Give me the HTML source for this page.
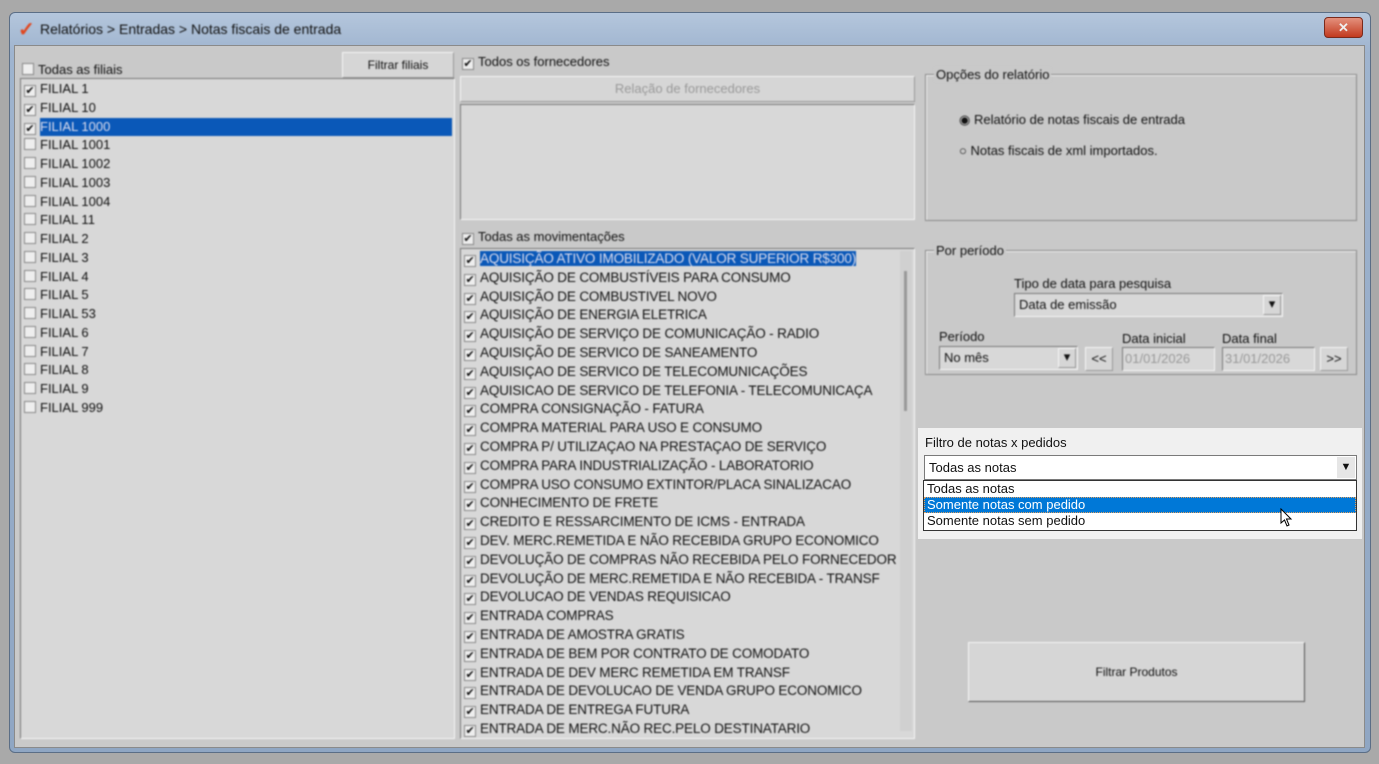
<!DOCTYPE html>
<html><head><meta charset="utf-8"><style>
*{margin:0;padding:0;box-sizing:border-box}
body{width:1379px;height:764px;background:#a9a9a9;font-family:"Liberation Sans",sans-serif;font-size:13px;color:#111;position:relative;overflow:hidden}
.a{position:absolute}
.win{left:9px;top:12px;width:1362px;height:741px;border-radius:6px;background:linear-gradient(#b4c6dc,#9fb4cf 40px,#8fa6c3);border:1px solid #5b6e86}
.cli{left:14px;top:45px;width:1351px;height:703px;background:#c9c9c9;border:1px solid #8a8a8a}
.blur{filter:blur(0.7px)}
.list{background:#d8d8d8;border:1px solid #7a7a7a;border-right-color:#f4f4f4;border-bottom-color:#f4f4f4}
.it{position:absolute;left:3px;height:18px;line-height:18px;white-space:nowrap}
.cb{display:inline-block;width:12px;height:12px;border:1px solid #888;background:#eee;vertical-align:-1px;margin-right:4px;font-size:11px;line-height:10px;text-align:center}
.btn{background:#d6d6d6;border:1px solid #999;border-top-color:#f5f5f5;border-left-color:#f5f5f5;text-align:center}
.grp{border:1px solid #8a8a8a;box-shadow:1px 1px 0 #f0f0f0 inset}
.lg{position:absolute;top:-8px;left:8px;background:#c9c9c9;padding:0 2px}
.sel{background:#0a58b8;color:#dde}
</style></head><body>
<div class="a win"></div>
<div class="a blur" style="left:18px;top:17px;font-size:20px;color:#e04820;font-weight:bold">✓</div>
<div class="a blur" style="left:40px;top:21px;font-size:14px">Relatórios &gt; Entradas &gt; Notas fiscais de entrada</div>
<div class="a" style="left:1324px;top:17px;width:39px;height:21px;border-radius:4px;background:linear-gradient(#e4917e,#c23a1f);border:1px solid #7a2a1c;color:#eee;text-align:center;font-weight:bold;line-height:19px">✕</div>
<div class="a cli"></div>
<div class="blur">
<div class="a" style="left:22px;top:62px"><span class="cb"></span>Todas as filiais</div>
<div class="a btn" style="left:342px;top:52px;width:112px;height:26px;line-height:24px;font-size:12px">Filtrar filiais</div>
<div class="a list" style="left:20px;top:78px;width:435px;height:661px">
<div class="it" style="top:1px"><span class="cb">✔</span>FILIAL 1</div>
<div class="it" style="top:20px"><span class="cb">✔</span>FILIAL 10</div>
<div class="it" style="top:39px"><span class="cb">✔</span><span class="sel" style="display:inline-block;width:412px">FILIAL 1000</span></div>
<div class="it" style="top:57px"><span class="cb"></span>FILIAL 1001</div>
<div class="it" style="top:76px"><span class="cb"></span>FILIAL 1002</div>
<div class="it" style="top:95px"><span class="cb"></span>FILIAL 1003</div>
<div class="it" style="top:114px"><span class="cb"></span>FILIAL 1004</div>
<div class="it" style="top:132px"><span class="cb"></span>FILIAL 11</div>
<div class="it" style="top:151px"><span class="cb"></span>FILIAL 2</div>
<div class="it" style="top:170px"><span class="cb"></span>FILIAL 3</div>
<div class="it" style="top:189px"><span class="cb"></span>FILIAL 4</div>
<div class="it" style="top:207px"><span class="cb"></span>FILIAL 5</div>
<div class="it" style="top:226px"><span class="cb"></span>FILIAL 53</div>
<div class="it" style="top:245px"><span class="cb"></span>FILIAL 6</div>
<div class="it" style="top:264px"><span class="cb"></span>FILIAL 7</div>
<div class="it" style="top:282px"><span class="cb"></span>FILIAL 8</div>
<div class="it" style="top:301px"><span class="cb"></span>FILIAL 9</div>
<div class="it" style="top:320px"><span class="cb"></span>FILIAL 999</div>
</div>
<div class="a" style="left:462px;top:54px"><span class="cb">✔</span>Todos os fornecedores</div>
<div class="a btn" style="left:460px;top:76px;width:455px;height:26px;line-height:24px;color:#999">Relação de fornecedores</div>
<div class="a list" style="left:460px;top:104px;width:455px;height:116px"></div>
<div class="a" style="left:462px;top:229px"><span class="cb">✔</span>Todas as movimentações</div>
<div class="a list" style="left:460px;top:248px;width:455px;height:491px;overflow:hidden">
<div class="a" style="right:2px;top:2px;width:12px;height:480px;background:#d0d0d0"><div style="margin:20px 4px;width:3px;height:140px;background:#999"></div></div>
<div style="position:absolute;top:1px;left:3px;line-height:18.8px;font-size:13.5px;letter-spacing:-0.15px;white-space:nowrap">
<div><span class="cb">✔</span><span class="sel">AQUISIÇÃO ATIVO IMOBILIZADO (VALOR SUPERIOR R$300)</span></div>
<div><span class="cb">✔</span>AQUISIÇÃO DE COMBUSTÍVEIS PARA CONSUMO</div>
<div><span class="cb">✔</span>AQUISIÇÃO DE COMBUSTIVEL NOVO</div>
<div><span class="cb">✔</span>AQUISIÇÃO DE ENERGIA ELETRICA</div>
<div><span class="cb">✔</span>AQUISIÇÃO DE SERVIÇO DE COMUNICAÇÃO - RADIO</div>
<div><span class="cb">✔</span>AQUISIÇÃO DE SERVICO DE SANEAMENTO</div>
<div><span class="cb">✔</span>AQUISIÇAO DE SERVICO DE TELECOMUNICAÇÕES</div>
<div><span class="cb">✔</span>AQUISICAO DE SERVICO DE TELEFONIA - TELECOMUNICAÇA</div>
<div><span class="cb">✔</span>COMPRA CONSIGNAÇÃO - FATURA</div>
<div><span class="cb">✔</span>COMPRA MATERIAL PARA USO E CONSUMO</div>
<div><span class="cb">✔</span>COMPRA P/ UTILIZAÇAO NA PRESTAÇAO DE SERVIÇO</div>
<div><span class="cb">✔</span>COMPRA PARA INDUSTRIALIZAÇÃO - LABORATORIO</div>
<div><span class="cb">✔</span>COMPRA USO CONSUMO EXTINTOR/PLACA SINALIZACAO</div>
<div><span class="cb">✔</span>CONHECIMENTO DE FRETE</div>
<div><span class="cb">✔</span>CREDITO E RESSARCIMENTO DE ICMS - ENTRADA</div>
<div><span class="cb">✔</span>DEV. MERC.REMETIDA E NÃO RECEBIDA GRUPO ECONOMICO</div>
<div><span class="cb">✔</span>DEVOLUÇÃO DE COMPRAS NÃO RECEBIDA PELO FORNECEDOR</div>
<div><span class="cb">✔</span>DEVOLUÇÃO DE MERC.REMETIDA E NÃO RECEBIDA - TRANSF</div>
<div><span class="cb">✔</span>DEVOLUCAO DE VENDAS REQUISICAO</div>
<div><span class="cb">✔</span>ENTRADA COMPRAS</div>
<div><span class="cb">✔</span>ENTRADA DE AMOSTRA GRATIS</div>
<div><span class="cb">✔</span>ENTRADA DE BEM POR CONTRATO DE COMODATO</div>
<div><span class="cb">✔</span>ENTRADA DE DEV MERC REMETIDA EM TRANSF</div>
<div><span class="cb">✔</span>ENTRADA DE DEVOLUCAO DE VENDA GRUPO ECONOMICO</div>
<div><span class="cb">✔</span>ENTRADA DE ENTREGA FUTURA</div>
<div><span class="cb">✔</span>ENTRADA DE MERC.NÃO REC.PELO DESTINATARIO</div>
</div></div>
<div class="a grp" style="left:925px;top:74px;width:432px;height:147px"><div class="lg">Opções do relatório</div>
<div class="a" style="left:33px;top:37px">◉ Relatório de notas fiscais de entrada</div>
<div class="a" style="left:33px;top:68px">○ Notas fiscais de xml importados.</div></div>
<div class="a grp" style="left:925px;top:250px;width:432px;height:125px"><div class="lg">Por período</div>
<div class="a" style="left:88px;top:25px">Tipo de data para pesquisa</div>
<div class="a list" style="left:88px;top:42px;width:269px;height:24px;padding:3px 4px">Data de emissão<span style="position:absolute;right:1px;top:1px;width:18px;height:20px" class="btn">▾</span></div>
<div class="a" style="left:13px;top:78px">Período</div>
<div class="a list" style="left:13px;top:95px;width:139px;height:24px;padding:3px 4px">No mês<span style="position:absolute;right:1px;top:1px;width:18px;height:20px" class="btn">▾</span></div>
<div class="a btn" style="left:159px;top:96px;width:28px;height:24px;line-height:22px">&lt;&lt;</div>
<div class="a" style="left:196px;top:80px">Data inicial</div>
<div class="a list" style="left:196px;top:96px;width:93px;height:24px;padding:3px 2px;color:#999">01/01/2026</div>
<div class="a" style="left:296px;top:80px">Data final</div>
<div class="a list" style="left:296px;top:96px;width:93px;height:24px;padding:3px 2px;color:#999">31/01/2026</div>
<div class="a btn" style="left:394px;top:96px;width:28px;height:24px;line-height:22px">&gt;&gt;</div>
</div>
<div class="a btn" style="left:968px;top:642px;width:337px;height:60px;line-height:58px;font-size:12px;border-right-color:#555;border-bottom-color:#555">Filtrar Produtos</div>
</div>
<div class="a" style="left:918px;top:428px;width:444px;height:111px;background:#f0f0f0;font-size:13px">
<div class="a" style="left:7px;top:7px">Filtro de notas x pedidos</div>
<div class="a" style="left:6px;top:27px;width:433px;height:25px;background:#fff;border:1px solid #7a7a7a;padding:4px 4px">Todas as notas<span class="a" style="right:1px;top:1px;width:18px;height:21px;background:#e6e6e6;text-align:center;font-size:11px;line-height:21px">▼</span></div>
<div class="a" style="left:5px;top:52px;width:434px;height:51px;background:#fff;border:1px solid #333">
<div style="height:16px;line-height:16px;padding-left:3px">Todas as notas</div>
<div style="height:16px;line-height:16px;padding-left:3px;background:#0078d7;color:#fff;outline:1px dotted #e0a060;outline-offset:-1px">Somente notas com pedido</div>
<div style="height:16px;line-height:16px;padding-left:3px">Somente notas sem pedido</div></div>
<svg class="a" style="left:362px;top:80px" width="14" height="20" viewBox="0 0 14 20"><path d="M1 1 L1 15 L4.5 12 L7 18 L9 17 L6.5 11 L11 11 Z" fill="#fff" stroke="#000" stroke-width="1"/></svg>
</div>
</body></html>
